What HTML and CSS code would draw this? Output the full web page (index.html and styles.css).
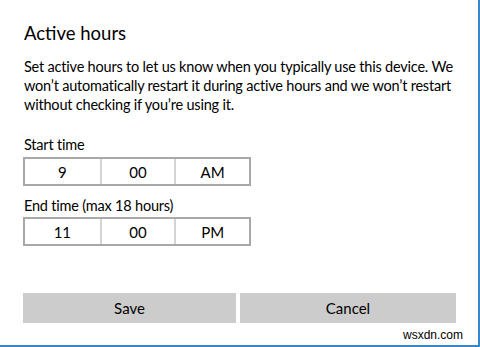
FILE: index.html
```html
<!DOCTYPE html>
<html>
<head>
<meta charset="utf-8">
<link rel="stylesheet" href="styles.css">
</head>
<body>
<div class="dialog">
  <h1 class="title">Active hours</h1>
  <p class="desc">Set active hours to let us know when you typically use this device. We<br>won’t automatically restart it during active hours and we won’t restart<br>without checking if you’re using it.</p>
  <div class="label first">Start time</div>
  <div class="picker">
    <div class="cell">9</div>
    <div class="cell">00</div>
    <div class="cell">AM</div>
  </div>
  <div class="label second">End time (max 18 hours)</div>
  <div class="picker">
    <div class="cell">11</div>
    <div class="cell">00</div>
    <div class="cell">PM</div>
  </div>
  <div class="actions">
    <div class="btn">Save</div>
    <div class="btn">Cancel</div>
  </div>
  <div class="watermark">wsxdn.com</div>
</div>
</body>
</html>
```
FILE: styles.css
```css
html, body {
  margin: 0;
  padding: 0;
  background: #fff;
}
.dialog {
  position: relative;
  box-sizing: border-box;
  width: 480px;
  height: 347px;
  border-right: 2px solid #3a86c6;
  border-bottom: 2px solid #3a86c6;
  padding: 21px 0 0 24px;
  font-family: Lato, "Noto Sans", sans-serif;
  color: #000;
}
.title {
  margin: 0;
  font-size: 18.5px;
  font-weight: 400;
  line-height: 24px;
}
.desc {
  margin: 12px 0 0;
  white-space: nowrap;
  font-size: 14.5px;
  letter-spacing: -0.2px;
  line-height: 19px;
}
.label {
  font-size: 14.5px;
  letter-spacing: -0.2px;
  line-height: 19px;
}
.label.first {
  margin: 21px 0 3px;
}
.label.second {
  margin: 10px 0 2px;
}
.picker {
  margin-left: -1px;
  box-sizing: border-box;
  width: 228px;
  height: 29px;
  border: 2px solid #a8a8a8;
  display: grid;
  grid-template-columns: 1fr 1fr 1fr;
}
.cell {
  display: flex;
  align-items: center;
  justify-content: center;
  font-size: 15px;
  border-left: 2px solid #d4d4d4;
}
.cell:first-child {
  border-left: none;
}
.actions {
  margin: 47px 0 0 -1px;
  width: 433px;
  display: grid;
  grid-template-columns: 213px 1fr;
  gap: 4px;
}
.btn {
  height: 30px;
  background: #cccccc;
  display: flex;
  align-items: center;
  justify-content: center;
  font-size: 15px;
}
.watermark {
  position: absolute;
  right: 14px;
  bottom: 3px;
  font-family: "Liberation Sans", Arial, sans-serif;
  font-size: 12px;
  line-height: 14px;
  background: #fff;
  padding: 0 1px;
}
```
